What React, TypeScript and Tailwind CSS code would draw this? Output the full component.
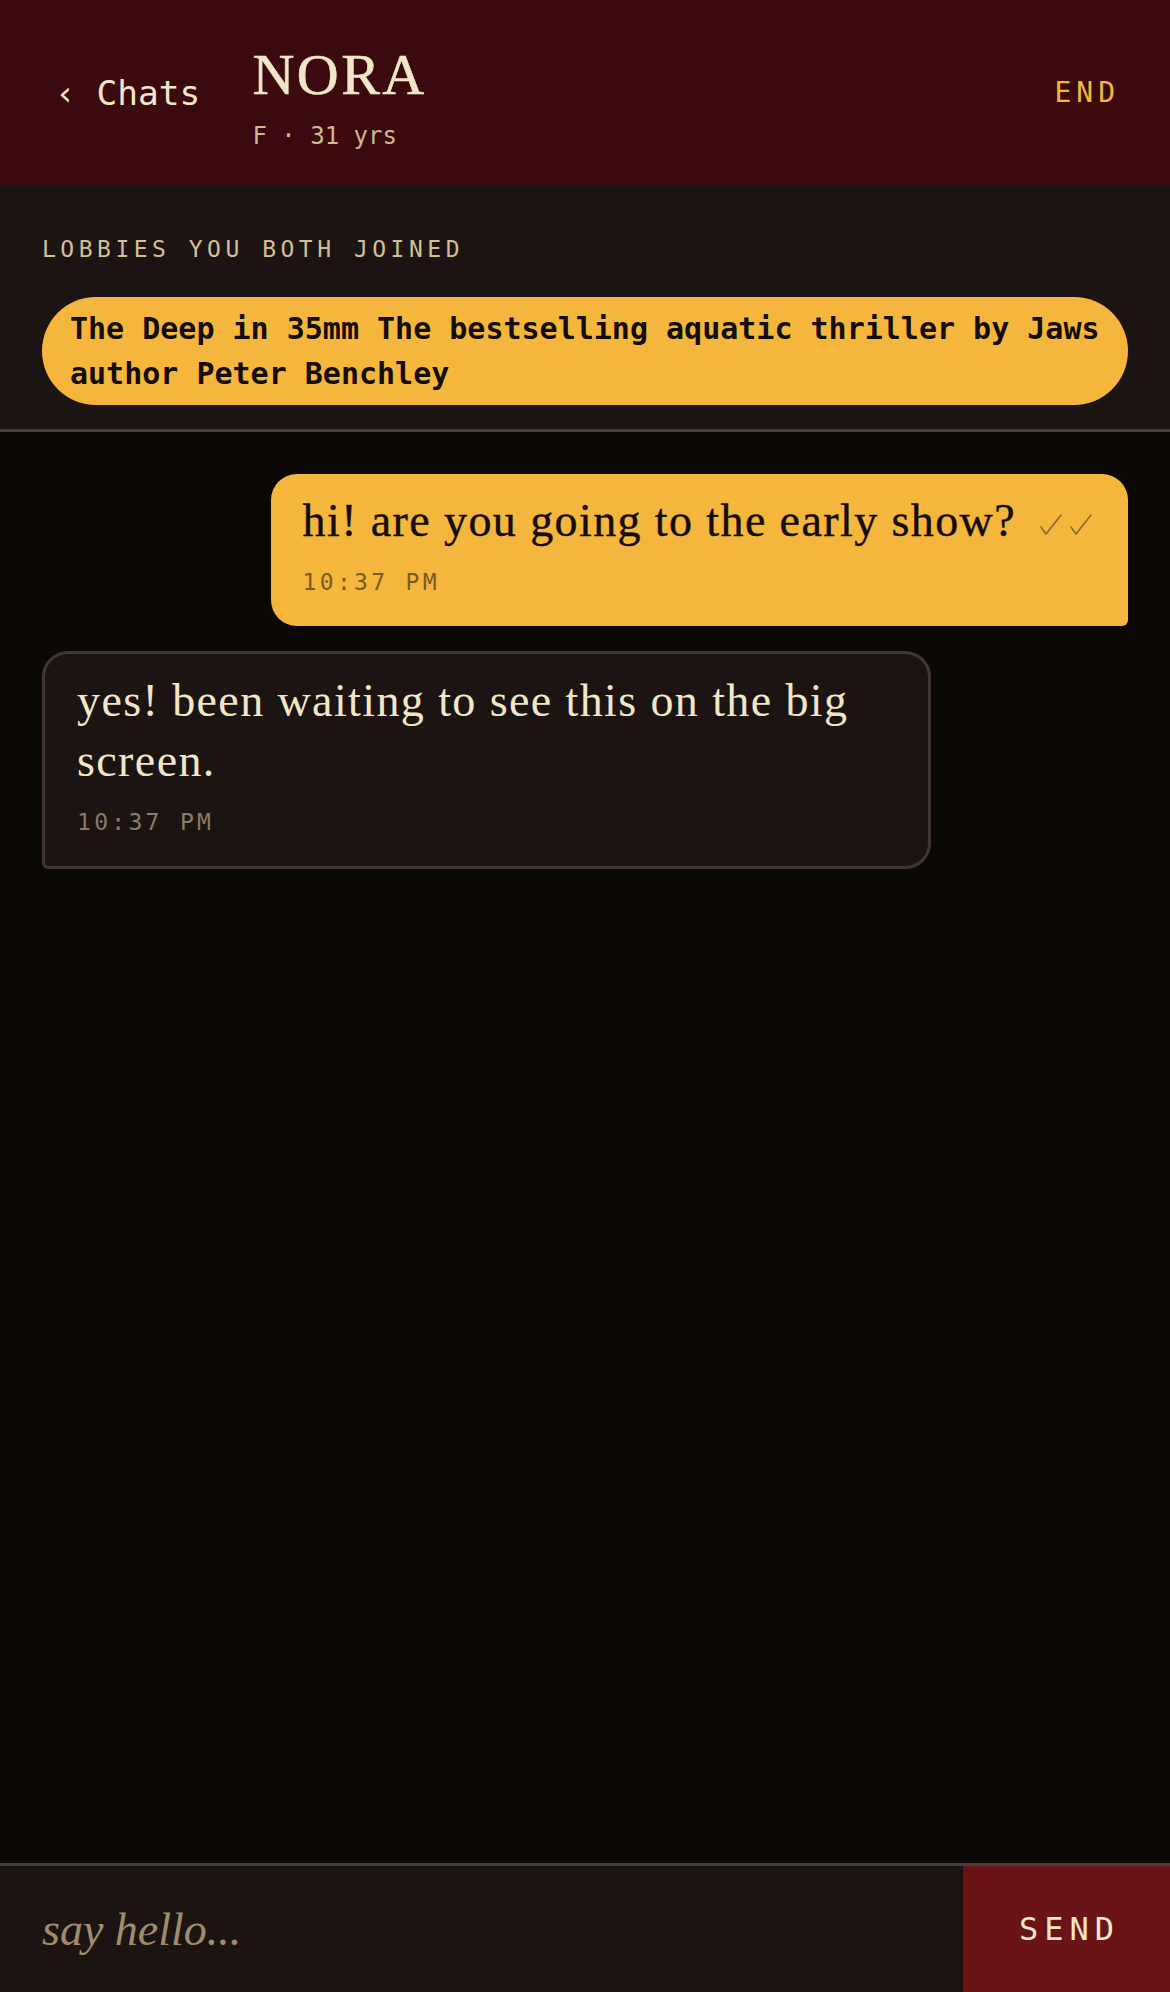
import React from "react";

function Checks() {
  return (
    <svg width="52" height="22" viewBox="0 0 52 22" fill="none" className="mt-[8px] shrink-0">
      <path d="M1 13 L6 20 L21 1" stroke="#8a6a2c" strokeWidth="1.6" strokeLinecap="round" strokeLinejoin="round" />
      <path d="M31 13 L36 20 L51 1" stroke="#8a6a2c" strokeWidth="1.6" strokeLinecap="round" strokeLinejoin="round" />
    </svg>
  );
}

export default function App() {
  return (
    <div className="flex h-[1992px] w-[1170px] flex-col bg-[#0b0806]">
      {/* Header */}
      <div className="flex h-[186px] shrink-0 items-center bg-[#3a0a0e] pl-[55px] pr-[50px]">
        <div className="font-['DejaVu_Sans_Mono',monospace] text-[34.5px] leading-[40px] text-[#f2e6c9]">
          ‹ Chats
        </div>
        <div className="ml-[52px] mt-[7px] flex flex-col">
          <div className="font-['Liberation_Serif',serif] text-[58px] leading-[64px] tracking-[2.5px] text-[#f2e6c9] [-webkit-text-stroke:0.6px_#f2e6c9]">
            NORA
          </div>
          <div className="mt-[14px] font-['DejaVu_Sans_Mono',monospace] text-[24px] leading-[30px] text-[#cdb98f]">
            F · 31 yrs
          </div>
        </div>
        <div className="ml-auto font-['DejaVu_Sans_Mono',monospace] text-[28px] leading-[34px] tracking-[5px] text-[#f4b63c]">
          END
        </div>
      </div>

      {/* Lobbies */}
      <div className="shrink-0 border-b-[3px] border-[#4a3f38] bg-[#1c1412] px-[42px] pb-[24px] pt-[48px]">
        <div className="font-['DejaVu_Sans_Mono',monospace] text-[23px] leading-[30px] tracking-[4.5px] text-[#d2bf97]">
          LOBBIES YOU BOTH JOINED
        </div>
        <div className="mt-[33px] rounded-full bg-[#f4b63c] py-[9px] pl-[28px] pr-[20px] font-['DejaVu_Sans_Mono',monospace] text-[30px] font-bold leading-[45px] text-[#140c08]">
          The Deep in 35mm The bestselling aquatic thriller by Jaws author Peter Benchley
        </div>
      </div>

      {/* Messages */}
      <div className="flex flex-1 flex-col gap-[25px] px-[42px] pt-[42px]">
        <div className="ml-auto flex flex-col rounded-[26px] rounded-br-[6px] bg-[#f4b63c] pb-[27px] pl-[32px] pr-[36px] pt-[17px]">
          <div className="flex items-center gap-[24px]">
            <div className="font-['Liberation_Serif',serif] text-[46px] leading-[60px] tracking-[1.4px] text-[#140c08] [-webkit-text-stroke:0.4px_#140c08]">
              hi! are you going to the early show?
            </div>
            <Checks />
          </div>
          <div className="mt-[14px] font-['DejaVu_Sans_Mono',monospace] text-[23px] leading-[34px] tracking-[3.3px] text-[#7a5a1e]">
            10:37 PM
          </div>
        </div>

        <div className="mr-auto flex max-w-[889px] flex-col rounded-[26px] rounded-bl-[6px] border-[3px] border-[#40362f] bg-[#1c1412] px-[32px] pb-[27px] pt-[17px]">
          <div className="font-['Liberation_Serif',serif] text-[46px] leading-[60px] tracking-[1.4px] text-[#f2e6c9]">
            yes! been waiting to see this on the big screen.
          </div>
          <div className="mt-[14px] font-['DejaVu_Sans_Mono',monospace] text-[23px] leading-[34px] tracking-[3.3px] text-[#8a7a66]">
            10:37 PM
          </div>
        </div>
      </div>

      {/* Composer */}
      <div className="flex h-[129px] shrink-0 border-t-[3px] border-[#4a3f38] bg-[#1c1412]">
        <input
          className="min-w-0 flex-1 bg-transparent pl-[42px] font-['Liberation_Serif',serif] text-[46px] italic text-[#f2e6c9] outline-none placeholder:text-[#a08c6c]"
          placeholder="say hello..."
        />
        <button className="flex w-[207px] shrink-0 items-center justify-center bg-[#6b1418] pl-[6px] font-['DejaVu_Sans_Mono',monospace] text-[32px] tracking-[6px] text-[#f2e6c9]">
          SEND
        </button>
      </div>
    </div>
  );
}
